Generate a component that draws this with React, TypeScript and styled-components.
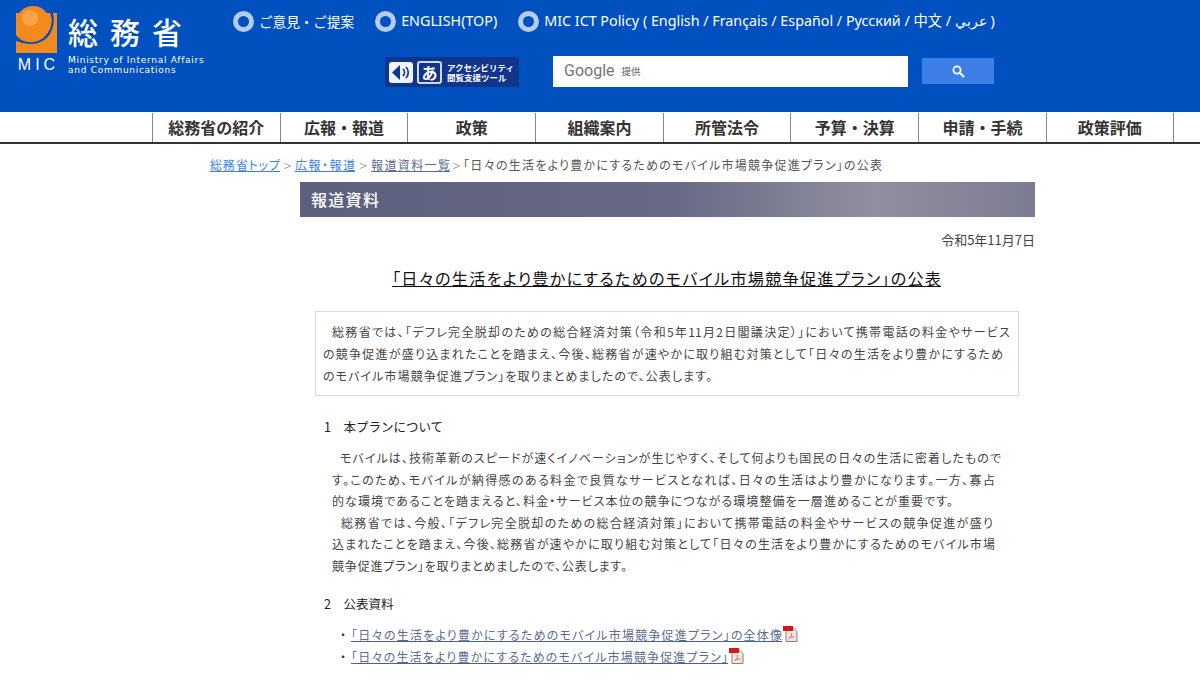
import React from "react";
import styled, { createGlobalStyle } from "styled-components";

const Global = createGlobalStyle`
  html, body { margin: 0; padding: 0; background: #fff; }
  body { width: 1200px; height: 683px; overflow: hidden; font-family: "Noto Sans CJK JP", "Noto Sans", sans-serif; color: #333; }
  a { color: inherit; }
`;

const Header = styled.header`
  height: 112px;
  background: #0050bf;
  display: flex;
  color: #fff;
  box-sizing: border-box;
  padding: 6px 0 0 16px;
`;
const Brand = styled.div`
  width: 217px;
  flex: none;
  display: flex;
  gap: 11px;
`;
const LogoCol = styled.div`
  width: 41px;
  flex: none;
  display: flex;
  flex-direction: column;
  align-items: center;
`;
const LogoMic = styled.div`
  font: 400 16px/14px "Liberation Sans", sans-serif;
  letter-spacing: 4px;
  margin: 5px -4px 0 0;
  white-space: nowrap;
`;
const BrandText = styled.div`
  padding-top: 7px;
`;
const BrandTitle = styled.div`
  font-size: 30px;
  line-height: 36px;
  letter-spacing: 12px;
  font-weight: 500;
  white-space: nowrap;
`;
const BrandSub = styled.div`
  font: 400 9px/10px "DejaVu Sans", sans-serif;
  letter-spacing: 0.72px;
  margin-top: 6px;
  white-space: nowrap;
`;
const HeaderMain = styled.div`
  display: flex;
  flex-direction: column;
`;
const TopLinks = styled.div`
  display: flex;
  align-items: center;
  height: 30px;
  white-space: nowrap;
`;
const TopLink = styled.span`
  display: flex;
  align-items: center;
  gap: 5px;
  margin-right: 21px;
  font-size: 13.6px;
  line-height: 18px;
`;
const Ring = styled.span`
  width: 11px;
  height: 11px;
  border: 5px solid #b5ccec;
  border-radius: 50%;
  background: #0050bf;
  flex: none;
`;
const LatinText = styled.span`
  font: 400 14.3px/18px "Noto Sans", "Noto Sans CJK JP", sans-serif;
`;
const SearchRow = styled.div`
  display: flex;
  align-items: center;
  margin: 19px 0 0 152px;
`;
const A11yBadge = styled.div`
  width: 134px;
  height: 30px;
  background: #10358a;
  flex: none;
  display: flex;
  align-items: center;
  padding-left: 4px;
  box-sizing: border-box;
  gap: 4px;
  margin-top: 2px;
`;
const SpeakerTile = styled.div`
  width: 24px;
  height: 21px;
  border-radius: 3px;
  background: #eef2fb;
  display: flex;
  align-items: center;
  justify-content: center;
  flex: none;
`;
const KanaTile = styled.div`
  width: 21px;
  height: 19px;
  border-radius: 3px;
  border: 2px solid #cfdaf0;
  background: #10358a;
  color: #fff;
  display: flex;
  align-items: center;
  justify-content: center;
  font-size: 16px;
  line-height: 19px;
  font-weight: 700;
  flex: none;
`;
const A11yText = styled.div`
  font-size: 8.5px;
  line-height: 10px;
  font-weight: 700;
  margin-left: 1px;
  white-space: nowrap;
`;
const SearchBox = styled.div`
  width: 355px;
  height: 31px;
  background: #fff;
  margin-left: 34px;
  display: flex;
  align-items: center;
  padding-left: 11px;
  box-sizing: border-box;
  gap: 7px;
`;
const GoogleWord = styled.span`
  font: 400 16px/20px "Roboto", sans-serif;
  color: #757575;
`;
const Provided = styled.span`
  font-size: 9.5px;
  font-weight: 500;
  color: #777;
`;
const SearchButton = styled.div`
  width: 72px;
  height: 26px;
  background: #3d7fe6;
  margin-left: 14px;
  display: flex;
  align-items: center;
  justify-content: center;
`;

const Nav = styled.nav`
  height: 31px;
  box-sizing: border-box;
  border-bottom: 2px solid #333;
  margin-top: 1px;
  display: flex;
  padding-left: 152px;
`;
const NavItem = styled.div`
  width: 127.7px;
  box-sizing: border-box;
  border-left: 1px solid #888;
  text-align: center;
  font-size: 16px;
  font-weight: 700;
  line-height: 29px;
  color: #333;
  white-space: nowrap;
  &:last-child { border-right: 1px solid #888; }
`;

const Breadcrumb = styled.div`
  margin: 12px 0 0 210px;
  display: flex;
  font-size: 12px;
  line-height: 18px;
  color: #555;
  white-space: nowrap;
  font-feature-settings: "palt";
`;
const Sep = styled.span<{ $w: number }>`
  width: ${(p) => p.$w}px;
  flex: none;
  text-align: center;
  color: #888;
  font-size: 14px;
  font-weight: 300;
`;
const CrumbLink = styled.a<{ $w: number; $visited?: boolean }>`
  display: block;
  flex: none;
  width: ${(p) => p.$w}px;
  text-align-last: justify;
  color: ${(p) => (p.$visited ? "#5b6b8e" : "#3b82e8")};
  text-decoration: underline;
`;
const CrumbCurrent = styled.span`
  flex: none;
  width: 419px;
  text-align-last: justify;
`;
const Main = styled.main`
  width: 735px;
  margin: 8px 0 0 300px;
`;
const Banner = styled.h2`
  margin: 0;
  height: 35px;
  background: linear-gradient(90deg, #5d5f7f 0%, #676985 50%, #908f9f 78%, #7c7c92 100%);
  color: #fff;
  font-size: 16px;
  font-weight: 500;
  line-height: 35px;
  padding-left: 11px;
  letter-spacing: 1.3px;
`;
const DateLine = styled.div`
  text-align: right;
  font-size: 13px;
  line-height: 18px;
  margin-top: 14px;
  color: #444;
`;
const Title = styled.h1`
  width: 549px;
  margin: 17px 0 0 92px;
  font-size: 16.15px;
  line-height: 24px;
  font-weight: 400;
  color: #111;
  text-decoration: underline;
  white-space: nowrap;
  text-align-last: justify;
  font-feature-settings: "palt";
`;
const Lead = styled.div`
  margin: 21px 16px 0 15px;
  border: 1px solid #d8d8d8;
  padding: 9px 7px 8px 7px;
  font-size: 12px;
  line-height: 22px;
  height: 85px;
  box-sizing: border-box;
  color: #444;
  font-feature-settings: "palt";
`;
const Line = styled.span<{ $w: number; $indent?: number }>`
  display: block;
  width: ${(p) => p.$w}px;
  margin-left: ${(p) => p.$indent ?? 0}px;
  white-space: nowrap;
  text-align: justify;
  text-align-last: justify;
`;
const SectionHead = styled.h3<{ $top: number }>`
  margin: ${(p) => p.$top}px 0 0;
  font-size: 12.5px;
  line-height: 20px;
  font-weight: 400;
  color: #222;
  padding-left: 24px;
  white-space: pre;
`;
const Paragraph = styled.div`
  margin: 10px 0 0 32px;
  font-size: 12px;
  line-height: 21.6px;
  color: #444;
  font-feature-settings: "palt";
`;
const Docs = styled.ul`
  list-style: none;
  margin: 10px 0 0 40px;
  padding: 0;
  font-size: 12px;
  line-height: 22px;
  white-space: nowrap;
  font-feature-settings: "palt";
`;
const DocItem = styled.li`
  display: flex;
  align-items: center;
`;
const DocLink = styled.a<{ $w: number }>`
  display: block;
  width: ${(p) => p.$w}px;
  text-align-last: justify;
  color: #5b6b8e;
  text-decoration: underline;
  text-decoration-color: #46608f;
`;
const Dot = styled.span`
  width: 11px;
  flex: none;
`;
const PdfIcon = styled.svg`
  flex: none;
  margin: -2px 0 0 1px;
`;

const Pdf = () => (
  <PdfIcon width="16" height="16" viewBox="0 0 16 16">
    <path d="M3 2.5h8l3 3v10H3z" fill="#efe6df" stroke="#8f8278" />
    <path d="M6 12.5c2-2 3-3.500 2.500-5.500M6 12.500c3-2 4-2 5.500-1" fill="none" stroke="#d9706a" />
    <rect x="0" y="0" width="10" height="5" fill="#d8141c" />
  </PdfIcon>
);

const nav = ["総務省の紹介", "広報・報道", "政策", "組織案内", "所管法令", "予算・決算", "申請・手続", "政策評価"];

export default function App() {
  return (
    <>
      <Global />
      <Header>
        <Brand>
          <LogoCol>
            <svg width="41" height="47" viewBox="0 0 41 47">
              <rect x="0" y="7" width="41" height="40" fill="#f28a1e" />
              <path d="M0 29 C9 41 30 38 35 20 C36 15 36 11 34 7 L37 7 C41 24 30 46 0 35z" fill="#0050bf" />
              <circle cx="17" cy="17" r="17" fill="#f28a1e" />
              <circle cx="14" cy="12" r="8" fill="#f8a348" />
            </svg>
            <LogoMic>MIC</LogoMic>
          </LogoCol>
          <BrandText>
            <BrandTitle>総務省</BrandTitle>
            <BrandSub>
              Ministry of Internal Affairs
              <br />
              and Communications
            </BrandSub>
          </BrandText>
        </Brand>
        <HeaderMain>
          <TopLinks>
            <TopLink><Ring />ご意見・ご提案</TopLink>
            <TopLink><Ring /><LatinText>ENGLISH(TOP)</LatinText></TopLink>
            <TopLink><Ring /><LatinText>MIC ICT Policy ( English / Français / Español / Русский / 中文 / عربي )</LatinText></TopLink>
          </TopLinks>
          <SearchRow>
            <A11yBadge>
              <SpeakerTile>
                <svg width="20" height="17" viewBox="0 0 20 17">
                  <path d="M1 8.500L9 1v15z" fill="#10358a" />
                  <path d="M12 5c2 2 2 5 0 7M15 3c3 3 3 8 0 11" fill="none" stroke="#10358a" strokeWidth="1.700" />
                </svg>
              </SpeakerTile>
              <KanaTile>あ</KanaTile>
              <A11yText>アクセシビリティ<br />閲覧支援ツール</A11yText>
            </A11yBadge>
            <SearchBox>
              <GoogleWord>Google</GoogleWord>
              <Provided>提供</Provided>
            </SearchBox>
            <SearchButton>
              <svg width="13" height="13" viewBox="0 0 13 13">
                <circle cx="5" cy="5" r="3.600" fill="none" stroke="#fff" strokeWidth="1.800" />
                <path d="M8 8l4 4" stroke="#fff" strokeWidth="2" />
              </svg>
            </SearchButton>
          </SearchRow>
        </HeaderMain>
      </Header>
      <Nav>
        {nav.map((n) => (
          <NavItem key={n}>{n}</NavItem>
        ))}
      </Nav>
      <Breadcrumb>
        <CrumbLink href="#" $w={70}>総務省トップ</CrumbLink>
        <Sep $w={15}>&gt;</Sep>
        <CrumbLink href="#" $w={60}>広報・報道</CrumbLink>
        <Sep $w={16}>&gt;</Sep>
        <CrumbLink href="#" $w={79} $visited>報道資料一覧</CrumbLink>
        <Sep $w={13}>&gt;</Sep>
        <CrumbCurrent>「日々の生活をより豊かにするためのモバイル市場競争促進プラン」の公表</CrumbCurrent>
      </Breadcrumb>
      <Main>
        <Banner>報道資料</Banner>
        <DateLine>令和5年11月7日</DateLine>
        <Title>「日々の生活をより豊かにするためのモバイル市場競争促進プラン」の公表</Title>
        <Lead>
          <Line $w={678} $indent={9}>総務省では、「デフレ完全脱却のための総合経済対策（令和5年11月2日閣議決定）」において携帯電話の料金やサービス</Line>
          <Line $w={680}>の競争促進が盛り込まれたことを踏まえ、今後、総務省が速やかに取り組む対策として「日々の生活をより豊かにするため</Line>
          <Line $w={389}>のモバイル市場競争促進プラン」を取りまとめましたので、公表します。</Line>
        </Lead>
        <SectionHead $top={21}>{"1　本プランについて"}</SectionHead>
        <Paragraph>
          <Line $w={661} $indent={8}>モバイルは、技術革新のスピードが速くイノベーションが生じやすく、そして何よりも国民の日々の生活に密着したもので</Line>
          <Line $w={663}>す。このため、モバイルが納得感のある料金で良質なサービスとなれば、日々の生活はより豊かになります。一方、寡占</Line>
          <Line $w={621}>的な環境であることを踏まえると、料金・サービス本位の競争につながる環境整備を一層進めることが重要です。</Line>
          <Line $w={652} $indent={9}>総務省では、今般、「デフレ完全脱却のための総合経済対策」において携帯電話の料金やサービスの競争促進が盛り</Line>
          <Line $w={663}>込まれたことを踏まえ、今後、総務省が速やかに取り組む対策として「日々の生活をより豊かにするためのモバイル市場</Line>
          <Line $w={295}>競争促進プラン」を取りまとめましたので、公表します。</Line>
        </Paragraph>
        <SectionHead $top={17}>{"2　公表資料"}</SectionHead>
        <Docs>
          <DocItem><Dot>・</Dot><DocLink href="#" $w={431}>「日々の生活をより豊かにするためのモバイル市場競争促進プラン」の全体像</DocLink><Pdf /></DocItem>
          <DocItem><Dot>・</Dot><DocLink href="#" $w={377}>「日々の生活をより豊かにするためのモバイル市場競争促進プラン」</DocLink><Pdf /></DocItem>
        </Docs>
      </Main>
    </>
  );
}
